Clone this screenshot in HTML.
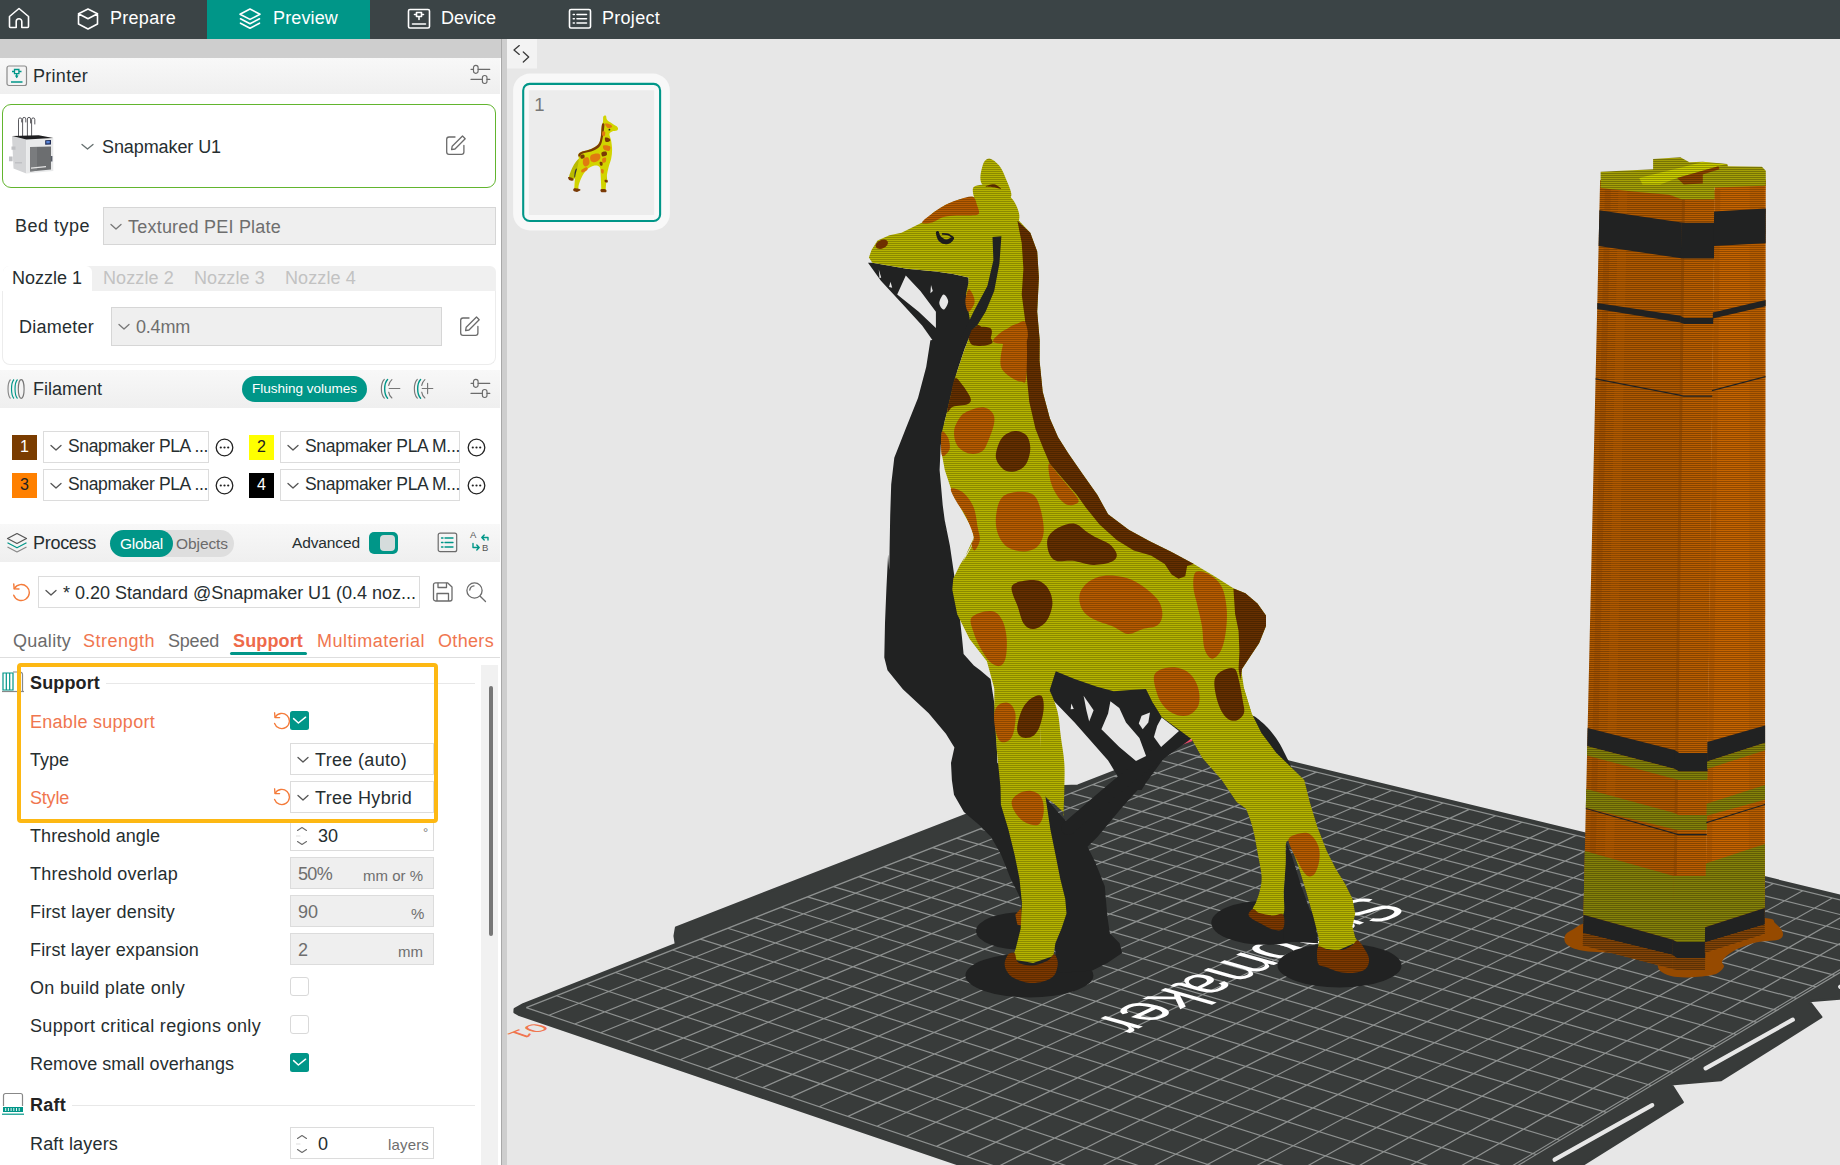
<!DOCTYPE html>
<html lang="en"><head><meta charset="utf-8"><title>Snapmaker Orca - Preview</title>
<style>
html,body{margin:0;padding:0;}
body{width:1840px;height:1165px;overflow:hidden;position:relative;background:#e7e7e7;font-family:"Liberation Sans",sans-serif;}
.t{position:absolute;white-space:nowrap;}
.b{position:absolute;box-sizing:border-box;}
#scene{position:absolute;left:0;top:0;}
</style></head><body>
<svg id="scene" width="1840" height="1165" viewBox="0 0 1840 1165"><defs><pattern id="p0" width="4" height="2" patternUnits="userSpaceOnUse"><rect width="4" height="1" fill="#b5b300"/><rect y="1" width="4" height="1" fill="#8b8900"/></pattern><pattern id="p1" width="4" height="2" patternUnits="userSpaceOnUse"><rect width="4" height="1" fill="#7c3800"/><rect y="1" width="4" height="1" fill="#602c00"/></pattern><pattern id="p2" width="4" height="2" patternUnits="userSpaceOnUse"><rect width="4" height="1" fill="#9c4b00"/><rect y="1" width="4" height="1" fill="#783900"/></pattern><pattern id="p3" width="4" height="2" patternUnits="userSpaceOnUse"><rect width="4" height="1" fill="#652f00"/><rect y="1" width="4" height="1" fill="#4d2500"/></pattern><pattern id="p4" width="4" height="2" patternUnits="userSpaceOnUse"><rect width="4" height="1" fill="#b75c00"/><rect y="1" width="4" height="1" fill="#8d4600"/></pattern><pattern id="p5" width="4" height="2" patternUnits="userSpaceOnUse"><rect width="4" height="1" fill="#b05900"/><rect y="1" width="4" height="1" fill="#804100"/></pattern><pattern id="p6" width="4" height="2" patternUnits="userSpaceOnUse"><rect width="4" height="1" fill="#ba5e00"/><rect y="1" width="4" height="1" fill="#864400"/></pattern><pattern id="p7" width="4" height="2" patternUnits="userSpaceOnUse"><rect width="4" height="1" fill="#c56400"/><rect y="1" width="4" height="1" fill="#8f4800"/></pattern><pattern id="p8" width="4" height="2" patternUnits="userSpaceOnUse"><rect width="4" height="1" fill="#848109"/><rect y="1" width="4" height="1" fill="#605d07"/></pattern><pattern id="p9" width="4" height="2" patternUnits="userSpaceOnUse"><rect width="4" height="1" fill="#814307"/><rect y="1" width="4" height="1" fill="#5d3105"/></pattern><pattern id="p10" width="4" height="2" patternUnits="userSpaceOnUse"><rect width="4" height="1" fill="#a5a007"/><rect y="1" width="4" height="1" fill="#777405"/></pattern><pattern id="p11" width="4" height="2" patternUnits="userSpaceOnUse"><rect width="4" height="1" fill="#cacc00"/><rect y="1" width="4" height="1" fill="#929400"/></pattern><pattern id="p12" width="4" height="2" patternUnits="userSpaceOnUse"><rect width="4" height="1" fill="#8e4600"/><rect y="1" width="4" height="1" fill="#663200"/></pattern></defs><polygon points="519.4,1014.9 514.6,1012.2 514.8,1009.1 523.2,1004.4 676.0,944.2 674.7,936.0 676.1,927.6 1037.1,787.3 1058.3,786.4 1077.9,785.7 1192.2,741.2 1199.4,740.8 1208.2,742.1 1942.2,920.6 1932.4,926.5 1945.3,940.9 1855.7,997.3 1808.9,1001.0 1808.9,1001.0 1821.2,1017.0 1721.0,1080.0 1671.1,1084.2 1671.1,1084.2 1682.6,1102.1 1569.8,1172.8 1516.3,1177.6 1516.3,1177.6 1526.6,1197.8 1398.8,1277.8 1341.2,1283.3 1329.2,1290.5" fill="#383b3a" stroke="#383b3a" stroke-width="2.5" stroke-linejoin="round"/>
<path d="M1384.1,1262.9 L1493.9,1201.2" stroke="#e7e7e7" stroke-width="4.2" stroke-linecap="round"/>
<path d="M1554.6,1159.7 L1652.2,1105.1" stroke="#e7e7e7" stroke-width="4.2" stroke-linecap="round"/>
<path d="M1705.6,1068.3 L1792.8,1019.7" stroke="#e7e7e7" stroke-width="4.2" stroke-linecap="round"/>
<path d="M1840.2,986.8 L1918.6,943.3" stroke="#e7e7e7" stroke-width="4.2" stroke-linecap="round"/>
<path d="M526.2,1007.6 L1328.6,1279.0 M556.4,995.7 L1356.3,1262.4 M586.1,984.0 L1383.5,1246.1 M615.4,972.5 L1410.2,1230.1 M644.1,961.2 L1436.3,1214.4 M672.5,950.0 L1462.0,1199.0 M700.3,939.1 L1487.2,1183.9 M727.7,928.3 L1512.0,1169.1 M754.7,917.6 L1536.3,1154.5 M781.3,907.2 L1560.1,1140.2 M807.5,896.9 L1583.5,1126.2 M833.2,886.7 L1606.5,1112.4 M858.6,876.7 L1629.2,1098.9 M883.6,866.9 L1651.4,1085.5 M908.2,857.2 L1673.2,1072.4 M932.5,847.7 L1694.7,1059.6 M956.4,838.2 L1715.7,1046.9 M979.9,829.0 L1736.5,1034.5 M1003.1,819.8 L1756.9,1022.3 M1026.0,810.8 L1776.9,1010.3 M1048.5,802.0 L1796.7,998.4 M1070.8,793.2 L1816.1,986.8 M1092.7,784.6 L1835.2,975.4 M1114.3,776.1 L1854.0,964.1 M1135.6,767.7 L1872.4,953.0 M1156.6,759.4 L1890.6,942.1 M1177.4,751.2 L1908.6,931.4 M1197.8,743.2 L1926.2,920.8 M526.2,1007.6 L1197.8,743.2 M549.0,1015.3 L1219.2,748.4 M574.7,1024.0 L1243.2,754.3 M600.6,1032.8 L1267.4,760.2 M626.9,1041.6 L1291.8,766.1 M653.4,1050.6 L1316.4,772.1 M680.2,1059.7 L1341.3,778.2 M707.4,1068.9 L1366.4,784.3 M734.9,1078.2 L1391.7,790.5 M762.6,1087.6 L1417.3,796.7 M790.8,1097.1 L1443.1,803.0 M819.2,1106.7 L1469.2,809.4 M848.0,1116.4 L1495.5,815.8 M877.1,1126.3 L1522.1,822.3 M906.6,1136.3 L1549.0,828.8 M936.5,1146.4 L1576.1,835.4 M966.7,1156.6 L1603.4,842.1 M997.3,1166.9 L1631.1,848.8 M1028.2,1177.4 L1659.0,855.6 M1059.6,1188.0 L1687.1,862.5 M1091.3,1198.7 L1715.6,869.5 M1123.4,1209.6 L1744.4,876.5 M1156.0,1220.6 L1773.4,883.5 M1188.9,1231.8 L1802.7,890.7 M1222.3,1243.1 L1832.4,897.9 M1256.1,1254.5 L1862.3,905.2 M1290.4,1266.1 L1892.6,912.6 M1325.1,1277.8 L1923.1,920.1 M1328.6,1279.0 L1926.2,920.8" stroke="#8d908f" stroke-width="1.2" fill="none"/>
<text transform="matrix(-0.53189 0.25363 -0.70690 -0.19994 1368.54 891.30)" x="12.4 73.8 126.1 179.4 233.7 317.2 374.4 426.8 486.3" y="-1.7 -1.3 -1.0 -0.6 -0.3 0.2 0.6 0.9 1.3" font-family="Liberation Sans, sans-serif" font-size="100" fill="#ffffff" >Snapmaker</text>
<text transform="matrix(-0.26911 0.10775 -0.22329 -0.07664 535.74 1022.48)" x="0.3 55.6" y="-0.2 -0.1" font-family="Liberation Sans, sans-serif" font-size="100" fill="#f0764f" >01</text>
<ellipse cx="1024.0" cy="931.0" rx="48" ry="19" fill="#212222" transform="rotate(0 1024.0 931.0)"/>
<ellipse cx="1029.4" cy="975.4" rx="64" ry="22" fill="#212222" transform="rotate(0 1029.4 975.4)"/>
<ellipse cx="1265.3" cy="922.8" rx="54" ry="22" fill="#212222" transform="rotate(0 1265.3 922.8)"/>
<ellipse cx="1339.5" cy="965.4" rx="62" ry="22" fill="#212222" transform="rotate(0 1339.5 965.4)"/>
<path d="M868.0,262.8 L880.9,280.8 L901.5,303.1 L922.1,325.4 L932.4,340.0 L930.4,340.3 L926.2,367.1 L918.0,398.0 L905.6,428.9 L894.3,457.8 L891.2,484.5 L890.2,515.5 L889.2,570.1 L888.1,554.3 L886.4,588.7 L885.0,623.0 L884.3,657.4 L887.5,670.3 L902.9,689.2 L928.7,713.2 L945.9,733.8 L954.4,747.6 L951.0,763.0 L951.9,780.2 L954.0,794.8 L963.9,812.1 L978.7,824.5 L991.1,836.9 L1000.9,854.2 L1010.8,878.9 L1018.3,893.7 L1022.0,903.6 L1018.3,918.5 L1033.1,918.5 L1033.1,854.2 L1033.1,780.0 L997.4,763.0 L995.6,711.5 L990.5,678.9 L980.2,670.3 L966.5,660.0 L991.1,708.9 L991.1,681.4 L977.4,669.4 L963.6,653.9 L961.9,636.8 L958.5,605.9 L954.2,574.9 L949.9,545.8 L944.7,520.0 L946.8,536.1 L942.7,505.1 L939.6,470.1 L940.7,445.4 L944.8,420.7 L951.0,398.0 L957.2,371.2 L965.4,346.5 L971.6,330.0 L977.1,325.4 L985.6,311.7 L994.2,291.1 L999.4,263.6 L1001.1,236.2 L992.5,237.0 L993.4,260.2 L987.4,285.9 L970.2,311.7 L968.5,277.4 L953.0,273.9 L935.9,271.4 L906.7,268.8 L872.3,262.8Z" fill="#212222" />
<path d="M905.8,275.6 L897.2,294.5 L918.7,311.7 L935.9,328.0 L935.9,311.7 L920.4,291.1Z" fill="#e7e7e7" />
<path d="M943.6,294.5 C945.1,294.2 948.2,298.9 948.2,301.4 C948.2,303.9 945.1,309.4 943.6,309.6 C942.1,309.9 939.3,305.6 939.3,303.1 C939.3,300.6 942.1,294.8 943.6,294.5Z" fill="#e7e7e7" />
<path d="M931.0,285.1 L932.8,291.1 L930.4,293.2Z" fill="#e7e7e7" />
<path d="M890.5,281.7 L892.2,287.7 L889.1,287.0Z" fill="#e7e7e7" />
<path d="M878.8,269.6 L881.2,277.4 L879.5,278.2Z" fill="#e7e7e7" />
<path d="M1043.0,794.8 L1057.8,812.1 L1070.2,825.7 L1107.3,794.8 L1122.1,780.0 L1146.8,780.0 L1122.1,807.2 L1097.4,836.9 L1087.5,846.8 L1094.9,861.6 L1104.8,886.3 L1107.3,916.0 L1109.8,933.3 L1119.6,943.2 L1122.1,953.1 L1107.3,963.0 L1092.4,970.4 L1057.8,972.9 L1052.9,928.4 L1047.9,854.2Z" fill="#212222" />
<path d="M1134,761.6 L1192,740" stroke="#f0476a" stroke-width="2.2"/>
<path d="M1055.7,664.5 L1074.6,671.2 L1097.0,679.0 L1113.7,683.4 L1130.4,682.3 L1150.5,682.3 L1159.5,702.4 L1167.3,716.9 L1184.0,729.2 L1191.8,731.4 L1186.2,738.1 L1174.0,749.3 L1163.9,758.2 L1146.1,782.8 L1141.6,790.0 L1117.1,790.0 L1121.5,782.8 L1108.1,760.4 L1074.6,722.5 L1046.7,693.5 L1049.0,686.8Z" fill="#212222" />
<path d="M1187.2,732.9 C1177.3,740.3 1147.6,761.5 1127.8,777.4 C1108.0,793.3 1078.4,819.6 1068.5,828.1" fill="none" stroke="#212222" stroke-width="14" stroke-linecap="round" stroke-linejoin="round" />
<path d="M1110.4,701.3 L1119.3,708.0 L1126.0,722.5 L1139.4,738.1 L1146.1,756.0 L1136.0,761.0 L1119.3,747.1 L1101.4,729.2 L1108.1,713.6Z" fill="#e7e7e7" />
<path d="M1161.7,717.5 L1179.0,730.9 L1161.1,747.1 L1153.9,737.0 L1157.2,725.8Z" fill="#e7e7e7" />
<path d="M1083.6,695.7 L1093.6,710.2 L1089.2,721.4 L1086.4,710.2Z" fill="#e7e7e7" />
<path d="M1141.6,715.8 L1150.0,712.5 L1148.3,722.5 L1142.7,729.2 L1138.8,723.6Z" fill="#e7e7e7" />
<path d="M1071.3,703.5 L1073.8,709.1 L1070.7,709.3Z" fill="#e7e7e7" />
<path d="M1252.0,716.0 C1253.0,714.2 1260.0,720.3 1264.0,724.0 C1268.0,727.7 1272.7,733.3 1276.0,738.0 C1279.3,742.7 1281.5,746.7 1284.0,752.0 C1286.5,757.3 1293.3,768.7 1291.0,770.0 C1288.7,771.3 1275.5,765.8 1270.0,760.0 C1264.5,754.2 1261.0,742.3 1258.0,735.0 C1255.0,727.7 1251.0,717.8 1252.0,716.0Z" fill="#212222" />
<path d="M1286.6,843.0 L1291.3,854.2 L1300.5,883.8 L1309.8,909.8 L1317.2,933.9 L1318.1,943.2 L1283.8,941.3 L1282.9,915.4 L1285.3,863.4Z" fill="#212222" />
<path d="M1042.0,685.8 C1043.4,677.7 1046.3,684.9 1048.9,689.2 C1051.4,693.5 1055.5,703.5 1057.5,711.5 C1059.5,719.5 1059.7,728.7 1060.9,737.3 C1062.0,745.9 1063.8,754.4 1064.3,763.0 C1064.9,771.6 1064.5,780.2 1064.3,788.8 C1064.2,797.4 1063.6,810.6 1063.5,814.5 C1063.3,818.4 1064.6,813.8 1063.3,812.1 C1061.9,810.5 1058.5,807.6 1055.4,804.7 C1052.2,801.8 1046.4,798.9 1044.2,794.8 C1042.0,790.7 1042.7,789.8 1042.0,780.2 C1041.3,770.6 1040.3,753.0 1040.3,737.3 C1040.3,721.5 1040.6,693.8 1042.0,685.8Z" fill="url(#p0)" />
<path d="M1230.1,780.0 C1225.7,784.9 1239.3,794.5 1243.0,802.3 C1246.8,810.0 1249.8,817.7 1252.3,826.4 C1254.8,835.0 1256.3,845.8 1257.9,854.2 C1259.4,862.5 1261.3,870.2 1261.6,876.4 C1261.9,882.6 1260.7,886.9 1259.7,891.3 C1258.8,895.6 1257.1,899.1 1256.0,902.4 C1254.9,905.6 1251.4,908.3 1253.2,910.7 C1255.1,913.2 1262.2,916.4 1267.2,917.2 C1272.1,918.0 1280.1,919.7 1282.9,915.4 C1285.7,911.0 1283.4,899.9 1283.8,891.3 C1284.3,882.6 1285.3,871.5 1285.7,863.4 C1286.1,855.4 1285.1,847.7 1286.1,843.0 C1287.0,838.4 1291.6,843.0 1291.3,835.6 C1290.9,828.2 1287.5,809.1 1283.8,798.5 C1280.1,788.0 1278.0,775.7 1269.0,772.6 C1260.0,769.5 1234.4,775.1 1230.1,780.0Z" fill="url(#p0)" />
<path d="M1248.6,913.9 C1248.9,912.3 1251.4,909.0 1253.2,908.9 C1255.1,908.7 1256.5,912.1 1259.7,913.1 C1263.0,914.2 1268.8,915.1 1272.7,915.4 C1276.6,915.6 1281.4,912.2 1283.1,914.4 C1284.8,916.7 1284.8,926.2 1283.1,928.7 C1281.4,931.2 1276.6,930.4 1272.7,929.5 C1268.8,928.5 1263.3,925.0 1259.7,923.1 C1256.2,921.3 1253.2,919.9 1251.4,918.3 C1249.5,916.8 1248.3,915.5 1248.6,913.9Z" fill="url(#p1)" />
<path d="M1015.3,914.8 L1021.2,908.1 L1022.7,925.9 L1017.3,924.4Z" fill="url(#p2)" />
<path d="M868.9,257.6 L871.5,249.9 L877.5,240.4 L889.5,235.3 L901.5,232.7 L922.1,222.4 L934.1,212.1 L946.2,204.4 L959.9,199.2 L972.8,196.7 L987.4,205.2 L1004.5,215.5 L1019.1,220.7 L1030.3,232.7 L1037.2,251.6 L1038.9,277.4 L1037.2,311.7 L1039.7,340.0 L1039.6,360.9 L1042.7,391.8 L1049.9,418.6 L1058.1,437.2 L1068.4,453.6 L1082.8,474.2 L1097.3,494.8 L1108.1,514.3 L1128.7,529.8 L1149.3,541.0 L1171.6,552.1 L1193.9,564.1 L1214.5,576.2 L1233.4,588.2 L1245.4,593.3 L1257.5,603.6 L1266.0,615.6 L1266.0,625.9 L1259.2,643.1 L1248.9,658.6 L1242.0,668.9 L1240.3,680.0 L1244.0,688.4 L1251.5,713.1 L1226.7,727.9 L1189.6,727.9 L1167.4,718.0 L1152.8,702.4 L1146.1,689.0 L1130.4,690.1 L1113.7,691.2 L1097.0,686.8 L1074.6,679.0 L1055.7,671.2 L1048.7,693.3 L1024.0,703.2 L994.3,688.4 L986.9,661.2 L969.6,638.9 L957.2,614.2 L952.3,589.5 L953.3,578.4 L960.2,564.6 L970.5,547.5 L975.6,533.7 L962.3,562.8 L969.5,550.5 L974.7,540.2 L971.6,527.8 L961.3,509.3 L951.0,488.7 L944.8,470.1 L941.7,453.6 L941.7,433.0 L946.8,412.4 L955.1,377.4 L963.3,352.7 L971.6,330.0 L968.5,311.7 L965.9,294.5 L968.5,282.5 L968.5,277.4 L953.0,273.9 L935.9,271.4 L906.7,268.8 L872.3,262.8Z" fill="url(#p0)" />
<path d="M982.2,184.6 C978.5,179.5 981.4,170.1 982.6,165.8 C983.7,161.4 986.3,158.5 989.1,158.5 C991.9,158.5 996.5,162.3 999.4,165.8 C1002.2,169.2 1004.2,174.6 1006.2,179.5 C1008.3,184.4 1011.7,192.1 1011.4,194.9 C1011.1,197.8 1009.4,198.4 1004.5,196.7 C999.7,194.9 985.9,189.8 982.2,184.6Z" fill="url(#p0)" />
<path d="M972.8,189.8 C972.9,186.8 974.6,186.3 977.1,185.5 C979.5,184.7 983.4,184.4 987.4,185.0 C991.4,185.6 996.8,186.4 1001.1,188.9 C1005.4,191.5 1010.1,195.9 1013.1,200.1 C1016.1,204.2 1018.3,209.8 1019.1,213.8 C1019.9,217.8 1018.9,221.0 1017.9,224.1 C1016.9,227.3 1015.6,231.1 1013.1,232.7 C1010.6,234.3 1006.2,234.2 1002.8,233.6 C999.4,233.0 995.7,232.0 992.5,229.3 C989.4,226.6 986.6,221.6 983.9,217.3 C981.2,213.0 978.1,208.1 976.2,203.5 C974.3,199.0 972.6,192.8 972.8,189.8Z" fill="url(#p0)" />
<path d="M1141.6,682.3 L1146.1,689.0 L1152.8,702.4 L1161.7,716.9 L1179.6,730.3 L1191.8,739.2 L1202.0,757.6 L1221.8,779.9 L1236.6,802.1 L1288.5,839.3 L1298.7,867.2 L1306.1,891.3 L1313.5,917.2 L1319.1,939.5 L1318.1,947.8 L1337.6,950.6 L1358.0,941.7 L1355.2,937.6 L1352.4,926.5 L1355.2,913.5 L1352.4,898.7 L1345.0,883.8 L1335.8,869.0 L1326.5,850.5 L1317.2,826.4 L1309.8,802.3 L1304.2,780.0 L1276.2,752.7 L1261.4,732.9 L1251.5,713.1 L1244.0,688.4 L1240.3,663.6 L1202.0,651.3Z" fill="url(#p0)" />
<path d="M1004.2,668.6 L994.3,688.4 L994.3,713.1 L996.8,750.2 L1000.5,787.3 L1000.9,804.7 L1008.4,829.5 L1014.5,854.2 L1019.5,878.9 L1022.0,903.6 L1020.7,928.4 L1015.8,948.2 L1012.1,959.3 L1033.1,963.0 L1053.4,956.1 L1055.4,943.2 L1061.5,928.4 L1066.5,913.5 L1065.2,898.7 L1060.3,878.9 L1055.4,854.2 L1050.4,829.5 L1046.7,804.7 L1043.0,780.0 L1043.7,780.2 L1042.0,763.0 L1040.3,737.3 L1042.0,697.8 L1055.7,671.2Z" fill="url(#p0)" />
<path d="M1004.7,963.5 C1004.9,960.6 1006.7,956.1 1008.4,954.3 C1010.0,952.6 1012.9,951.7 1014.5,953.1 C1016.2,954.5 1015.2,960.4 1018.3,962.5 C1021.4,964.6 1028.2,965.8 1033.1,965.5 C1038.0,965.1 1044.4,962.4 1047.9,960.5 C1051.4,958.7 1052.5,953.9 1054.1,954.3 C1055.8,954.7 1057.8,959.5 1057.8,963.0 C1057.8,966.5 1056.6,972.3 1054.1,975.4 C1051.6,978.4 1047.3,980.3 1043.0,981.5 C1038.7,982.8 1033.1,983.4 1028.2,982.8 C1023.2,982.2 1016.8,979.7 1013.3,977.8 C1009.8,976.0 1008.6,974.0 1007.1,971.6 C1005.7,969.3 1004.5,966.4 1004.7,963.5Z" fill="url(#p1)" />
<path d="M1318.1,946.9 C1319.8,944.6 1324.2,949.2 1328.3,949.7 C1332.5,950.1 1339.2,950.4 1343.2,949.7 C1347.2,948.9 1350.0,946.6 1352.4,945.0 C1354.9,943.5 1355.8,939.5 1358.0,940.4 C1360.2,941.3 1363.6,947.3 1365.4,950.6 C1367.3,953.8 1369.1,956.8 1369.1,959.9 C1369.1,963.0 1367.9,967.0 1365.4,969.1 C1363.0,971.3 1358.6,972.4 1354.3,972.8 C1350.0,973.3 1344.1,972.8 1339.5,971.9 C1334.8,971.0 1330.0,968.7 1326.5,967.3 C1322.9,965.9 1319.5,967.0 1318.1,963.6 C1316.8,960.2 1316.4,949.2 1318.1,946.9Z" fill="url(#p1)" />
<path d="M1017.4,220.7 L1030.3,232.7 L1037.2,251.6 L1038.9,277.4 L1037.2,311.7 L1039.7,340.0 L1039.6,360.9 L1042.7,391.8 L1049.9,418.6 L1058.1,437.2 L1068.4,453.6 L1082.8,474.2 L1097.3,494.8 L1108.1,514.3 L1128.7,529.8 L1149.3,541.0 L1171.6,552.1 L1193.9,564.1 L1187.1,565.9 L1185.3,576.2 L1178.5,578.7 L1171.6,574.4 L1164.7,564.1 L1151.0,555.5 L1133.8,550.4 L1116.7,540.1 L1099.5,524.6 L1085.8,507.5 L1076.7,494.8 L1049.9,463.9 L1043.7,449.5 L1035.5,428.9 L1029.3,402.1 L1026.2,371.2 L1025.1,330.0 L1025.1,320.3 L1021.7,294.5 L1023.4,268.8 L1021.7,243.0Z" fill="url(#p3)" />
<path d="M1233.4,588.5 L1245.4,593.3 L1257.5,603.6 L1266.0,615.6 L1266.0,625.9 L1259.2,643.1 L1248.9,658.6 L1242.0,668.9 L1240.3,680.0 L1238.6,668.9 L1239.4,651.7 L1238.6,631.1 L1235.1,613.9Z" fill="url(#p3)" />
<path d="M922.1,222.4 C922.4,220.7 930.1,215.1 934.1,212.1 C938.1,209.1 941.9,206.5 946.2,204.4 C950.4,202.2 955.5,200.5 959.9,199.2 C964.3,197.9 969.9,195.7 972.8,196.7 C975.6,197.7 976.1,202.4 977.1,205.2 C978.1,208.1 979.9,212.1 978.8,213.8 C977.6,215.5 973.9,215.3 970.2,215.5 C966.5,215.8 961.0,215.3 956.5,215.5 C951.9,215.8 946.7,216.1 942.7,217.3 C938.7,218.4 935.9,221.6 932.4,222.4 C929.0,223.3 921.8,224.1 922.1,222.4Z" fill="url(#p4)" />
<ellipse cx="881.8" cy="244.2" rx="6.5" ry="4.2" fill="#6e3000" transform="rotate(-25 881.8 244.2)"/>
<path d="M985.6,186.4 C985.6,185.9 991.7,183.9 994.2,184.3 C996.8,184.7 1001.1,188.4 1001.1,188.9 C1001.1,189.4 996.8,187.6 994.2,187.2 C991.7,186.8 985.6,186.8 985.6,186.4Z" fill="url(#p3)" />
<path d="M935.9,232.7 C935.9,231.2 937.6,230.8 938.4,231.3 C939.2,231.9 939.4,234.8 940.7,236.2 C941.9,237.5 944.3,239.4 946.2,239.6 C948.0,239.8 950.3,237.4 951.6,237.2 C953.0,237.0 954.3,237.6 954.1,238.6 C953.9,239.5 952.1,242.1 950.4,243.0 C948.8,243.9 946.1,244.5 944.1,244.1 C942.1,243.6 939.8,242.3 938.4,240.4 C937.1,238.6 935.9,234.2 935.9,232.7Z" fill="#1c1c1c" />
<path d="M942.7,233.8 C943.6,233.9 946.2,233.8 947.9,234.4 C949.6,235.1 952.2,237.0 953.0,237.5" fill="none" stroke="#1c1c1c" stroke-width="1.8" stroke-linecap="round" stroke-linejoin="round" />
<path d="M977.1,325.4 C979.6,323.7 983.1,329.4 985.6,332.3 C988.2,335.2 993.4,340.3 992.5,342.6 C991.7,344.9 984.2,346.0 980.5,346.0 C976.8,346.0 970.8,346.0 970.2,342.6 C969.6,339.2 974.5,327.2 977.1,325.4Z" fill="url(#p3)" />
<path d="M994.2,342.6 C990.2,340.9 997.7,335.2 1001.1,332.3 C1004.5,329.4 1010.8,327.2 1014.8,325.4 C1018.8,323.7 1023.4,319.1 1025.1,322.0 C1026.9,324.9 1030.3,339.2 1025.1,342.6 C1020.0,346.0 998.2,344.3 994.2,342.6Z" fill="url(#p4)" />
<path d="M968.5,289.4 C969.7,288.2 971.8,292.2 972.8,294.5 C973.8,296.8 975.2,300.3 974.5,303.1 C973.8,306.0 970.0,312.0 968.5,311.7 C967.0,311.4 965.4,305.1 965.4,301.4 C965.4,297.7 967.2,290.5 968.5,289.4Z" fill="url(#p4)" />
<path d="M971.6,327.9 C975.2,326.2 987.0,326.2 990.1,327.9 C993.3,329.7 991.6,335.4 990.5,338.2 C989.5,341.1 986.8,343.7 983.9,344.8 C981.1,345.9 976.2,345.9 973.6,344.8 C971.1,343.7 968.8,341.1 968.5,338.2 C968.1,335.4 968.0,329.7 971.6,327.9Z" fill="url(#p3)" />
<path d="M1008.7,327.9 C1012.4,324.8 1022.2,319.7 1025.1,327.9 C1028.1,336.2 1026.9,368.5 1026.2,377.4 C1025.5,386.3 1023.3,381.3 1021.0,381.5 C1018.8,381.7 1015.7,380.1 1012.8,378.4 C1009.9,376.7 1005.6,373.8 1003.5,371.2 C1001.5,368.6 1000.6,367.1 1000.4,363.0 C1000.3,358.8 1001.1,352.3 1002.5,346.5 C1003.9,340.6 1004.9,331.0 1008.7,327.9Z" fill="url(#p4)" />
<path d="M955.1,378.4 C956.8,376.7 958.7,380.3 961.3,383.6 C963.8,386.8 969.5,394.6 970.5,398.0 C971.6,401.4 970.4,402.7 967.5,404.2 C964.5,405.6 956.4,405.3 953.0,406.7 C949.7,408.0 947.6,414.1 947.3,412.0 C946.9,409.9 949.7,399.5 951.0,393.9 C952.3,388.3 953.4,380.1 955.1,378.4Z" fill="url(#p3)" />
<path d="M965.4,412.4 C969.2,410.5 977.4,407.3 981.9,407.3 C986.3,407.3 990.1,409.8 992.2,412.4 C994.2,415.0 994.9,417.9 994.2,422.7 C993.6,427.5 990.1,436.5 988.1,441.3 C986.0,446.1 985.0,449.5 981.9,451.6 C978.8,453.6 973.6,454.7 969.5,453.6 C965.4,452.6 959.7,449.2 957.2,445.4 C954.6,441.6 953.7,435.4 954.1,431.0 C954.4,426.5 957.3,421.7 959.2,418.6 C961.1,415.5 961.6,414.3 965.4,412.4Z" fill="url(#p4)" />
<path d="M941.7,432.0 C942.7,429.1 946.5,434.6 947.9,437.2 C949.3,439.7 950.1,444.7 949.9,447.5 C949.8,450.2 948.2,452.4 946.8,453.6 C945.5,454.8 942.6,458.3 941.7,454.7 C940.8,451.1 940.7,434.9 941.7,432.0Z" fill="url(#p4)" />
<path d="M1002.5,437.2 C1005.6,433.7 1010.9,431.3 1014.8,431.0 C1018.8,430.6 1023.6,432.3 1026.2,435.1 C1028.8,437.8 1030.1,443.0 1030.3,447.5 C1030.5,451.9 1029.1,458.1 1027.2,461.9 C1025.3,465.7 1022.4,468.6 1019.0,470.1 C1015.5,471.7 1010.2,472.5 1006.6,471.1 C1003.0,469.8 999.0,465.1 997.3,461.9 C995.6,458.6 995.4,455.7 996.3,451.6 C997.2,447.5 999.4,440.6 1002.5,437.2Z" fill="url(#p3)" />
<path d="M1048.8,463.9 C1050.0,462.6 1054.9,470.5 1058.1,474.2 C1061.4,478.0 1065.0,482.1 1068.4,486.6 C1071.9,491.1 1078.7,497.9 1078.7,501.0 C1078.7,504.1 1071.9,505.8 1068.4,505.1 C1065.0,504.5 1061.0,500.7 1058.1,496.9 C1055.2,493.1 1052.5,488.0 1050.9,482.5 C1049.4,477.0 1047.6,465.3 1048.8,463.9Z" fill="url(#p4)" />
<path d="M1002.5,496.9 C1006.3,493.3 1013.8,492.1 1019.0,491.8 C1024.1,491.4 1029.8,491.9 1033.4,494.8 C1037.0,497.8 1038.9,503.1 1040.6,509.3 C1042.3,515.5 1044.2,525.8 1043.7,531.9 C1043.2,538.1 1040.9,543.1 1037.5,546.4 C1034.1,549.6 1028.2,551.5 1023.1,551.5 C1017.9,551.5 1010.9,549.6 1006.6,546.4 C1002.3,543.1 999.0,537.4 997.3,531.9 C995.6,526.4 995.4,519.2 996.3,513.4 C997.2,507.6 998.7,500.5 1002.5,496.9Z" fill="url(#p4)" />
<path d="M951.0,488.7 C952.2,487.3 959.6,489.7 963.3,492.8 C967.1,495.9 971.2,501.4 973.6,507.2 C976.0,513.0 976.7,522.3 977.8,527.8 C978.8,533.3 980.3,536.4 979.8,540.2 C979.3,544.0 976.0,549.8 974.7,550.5 C973.3,551.2 971.7,546.7 971.6,544.3 C971.4,541.9 974.7,540.9 973.6,536.1 C972.6,531.3 968.3,521.3 965.4,515.5 C962.5,509.6 958.5,505.5 956.1,501.0 C953.7,496.6 949.8,490.0 951.0,488.7Z" fill="url(#p4)" />
<path d="M1047.8,538.1 C1049.4,534.0 1053.7,530.2 1058.1,527.8 C1062.6,525.4 1069.8,523.0 1074.6,523.7 C1079.4,524.4 1083.2,529.5 1087.0,531.9 C1090.7,534.3 1093.5,536.1 1097.3,538.1 C1101.0,540.2 1106.4,541.6 1109.6,544.3 C1112.9,547.0 1116.5,551.7 1116.8,554.6 C1117.2,557.5 1115.6,560.1 1111.7,561.8 C1107.7,563.5 1099.7,565.1 1093.1,564.9 C1086.6,564.7 1078.7,561.5 1072.5,560.8 C1066.4,560.1 1060.0,562.2 1056.1,560.8 C1052.1,559.4 1050.2,556.3 1048.8,552.5 C1047.5,548.8 1046.3,542.2 1047.8,538.1Z" fill="url(#p3)" />
<path d="M1011.6,587.0 C1012.6,582.7 1019.4,581.8 1024.0,580.8 C1028.5,579.8 1034.7,579.4 1038.8,580.8 C1042.9,582.2 1046.4,585.5 1048.7,589.5 C1051.0,593.4 1052.8,598.9 1052.4,604.3 C1052.0,609.7 1049.3,617.5 1046.2,621.6 C1043.1,625.7 1037.6,628.6 1033.9,629.0 C1030.1,629.4 1026.6,627.8 1024.0,624.1 C1021.3,620.4 1019.8,612.9 1017.8,606.8 C1015.7,600.6 1010.6,591.3 1011.6,587.0Z" fill="url(#p3)" />
<path d="M1079.6,594.4 C1080.6,589.9 1084.3,585.1 1088.3,582.0 C1092.2,578.9 1097.3,576.7 1103.1,575.9 C1108.9,575.0 1116.7,575.6 1122.9,577.1 C1129.1,578.5 1134.4,580.8 1140.2,584.5 C1146.0,588.2 1153.8,594.4 1157.5,599.3 C1161.2,604.3 1162.4,609.9 1162.4,614.2 C1162.4,618.5 1160.8,622.8 1157.5,625.3 C1154.2,627.8 1147.6,627.6 1142.7,629.0 C1137.7,630.5 1132.8,634.4 1127.8,634.0 C1122.9,633.6 1118.8,629.0 1113.0,626.5 C1107.2,624.1 1098.4,622.0 1093.2,619.1 C1088.1,616.2 1084.3,613.4 1082.1,609.2 C1079.8,605.1 1078.6,598.9 1079.6,594.4Z" fill="url(#p4)" />
<path d="M1195.8,572.1 C1198.5,570.1 1205.1,572.1 1209.4,574.6 C1213.8,577.1 1218.9,581.2 1221.8,587.0 C1224.7,592.8 1226.1,601.4 1226.7,609.2 C1227.4,617.1 1226.5,627.0 1225.5,634.0 C1224.5,641.0 1222.8,647.2 1220.6,651.3 C1218.3,655.4 1214.6,659.1 1211.9,658.7 C1209.2,658.3 1206.1,654.2 1204.5,648.8 C1202.8,643.4 1203.2,634.0 1202.0,626.5 C1200.8,619.1 1198.5,610.9 1197.1,604.3 C1195.6,597.7 1193.6,592.3 1193.4,587.0 C1193.1,581.6 1193.1,574.2 1195.8,572.1Z" fill="url(#p4)" />
<path d="M970.8,619.1 C971.8,616.0 975.5,614.2 979.5,612.9 C983.4,611.7 990.4,610.3 994.3,611.7 C998.2,613.2 1000.9,617.1 1002.9,621.6 C1005.0,626.1 1006.2,632.7 1006.7,638.9 C1007.1,645.1 1006.7,654.2 1005.4,658.7 C1004.2,663.2 1001.9,665.7 999.2,666.1 C996.6,666.5 992.6,664.5 989.3,661.2 C986.1,657.9 982.1,651.3 979.5,646.3 C976.8,641.4 974.7,636.0 973.3,631.5 C971.8,627.0 969.8,622.2 970.8,619.1Z" fill="url(#p4)" />
<path d="M1153.8,678.5 C1153.8,673.3 1156.5,671.7 1160.0,669.8 C1163.5,668.0 1169.9,666.7 1174.8,667.3 C1179.8,668.0 1185.7,670.0 1189.6,673.5 C1193.6,677.0 1196.9,683.0 1198.3,688.4 C1199.7,693.7 1200.2,701.1 1198.3,705.7 C1196.4,710.2 1191.5,714.3 1187.2,715.6 C1182.8,716.8 1176.9,715.6 1172.3,713.1 C1167.8,710.6 1163.1,706.5 1160.0,700.7 C1156.9,695.0 1153.8,683.6 1153.8,678.5Z" fill="url(#p4)" />
<path d="M1214.4,680.9 C1215.0,675.6 1218.5,673.1 1221.8,671.1 C1225.1,669.0 1231.3,666.9 1234.2,668.6 C1237.0,670.2 1237.7,675.6 1239.1,680.9 C1240.5,686.3 1242.0,695.4 1242.8,700.7 C1243.6,706.1 1245.1,709.8 1244.0,713.1 C1243.0,716.4 1239.5,719.7 1236.6,720.5 C1233.7,721.3 1229.8,720.9 1226.7,718.0 C1223.6,715.2 1220.1,709.4 1218.1,703.2 C1216.0,697.0 1213.8,686.3 1214.4,680.9Z" fill="url(#p3)" />
<path d="M994.3,713.1 C994.9,708.8 996.8,706.1 999.2,704.4 C1001.7,702.8 1006.5,701.8 1009.1,703.2 C1011.8,704.6 1014.5,708.6 1015.3,713.1 C1016.1,717.6 1015.1,725.9 1014.1,730.4 C1013.0,734.9 1011.4,738.4 1009.1,740.3 C1006.9,742.2 1002.7,743.2 1000.5,741.5 C998.2,739.9 996.6,735.1 995.5,730.4 C994.5,725.7 993.7,717.4 994.3,713.1Z" fill="url(#p4)" />
<path d="M1017.8,723.0 C1018.6,718.9 1020.5,712.3 1022.7,708.2 C1025.0,704.0 1028.3,700.3 1031.4,698.3 C1034.5,696.2 1039.2,694.1 1041.3,695.8 C1043.3,697.4 1044.0,703.2 1043.7,708.2 C1043.5,713.1 1041.7,720.9 1040.0,725.5 C1038.4,730.0 1036.5,733.3 1033.9,735.4 C1031.2,737.4 1026.6,738.2 1024.0,737.8 C1021.3,737.4 1018.8,735.4 1017.8,732.9 C1016.8,730.4 1017.0,727.1 1017.8,723.0Z" fill="url(#p3)" />
<path d="M1011.6,802.1 C1012.0,798.6 1015.7,795.3 1019.0,793.5 C1022.3,791.6 1027.7,790.4 1031.4,791.0 C1035.1,791.6 1039.2,793.7 1041.3,797.2 C1043.3,800.7 1044.2,807.5 1043.7,812.0 C1043.3,816.5 1041.7,822.5 1038.8,824.4 C1035.9,826.2 1030.1,824.8 1026.4,823.1 C1022.7,821.5 1019.0,818.0 1016.5,814.5 C1014.1,811.0 1011.2,805.6 1011.6,802.1Z" fill="url(#p4)" />
<path d="M1288.5,839.3 C1289.1,837.0 1292.0,835.8 1295.0,834.7 C1297.9,833.6 1303.0,832.4 1306.1,832.8 C1309.2,833.3 1311.3,834.9 1313.5,837.5 C1315.7,840.1 1318.1,844.6 1319.1,848.6 C1320.0,852.6 1319.7,857.6 1319.1,861.6 C1318.5,865.6 1316.9,870.2 1315.4,872.7 C1313.8,875.2 1311.7,876.4 1309.8,876.4 C1307.9,876.4 1306.4,875.5 1304.2,872.7 C1302.1,869.9 1299.0,863.8 1296.8,859.7 C1294.7,855.7 1292.6,852.0 1291.3,848.6 C1289.9,845.2 1287.9,841.7 1288.5,839.3Z" fill="url(#p4)" />
<path d="M992.5,237.0 L993.4,260.2 L987.4,285.9 L973.6,311.7 L959.9,340.0 L965.4,346.5 L971.6,330.0 L977.1,325.4 L985.6,311.7 L994.2,291.1 L999.4,263.6 L1001.4,236.2Z" fill="#212222" />
<path d="M1564.6,937.1 C1563.9,939.7 1564.7,943.1 1568.1,945.4 C1571.5,947.7 1576.2,949.6 1584.8,951.0 C1593.4,952.4 1608.2,952.1 1619.5,953.7 C1630.8,955.3 1646.2,957.9 1652.9,960.7 C1659.6,963.5 1656.8,967.9 1659.8,970.4 C1662.8,972.9 1666.1,974.8 1671.0,976.0 C1675.9,977.2 1681.8,977.6 1689.0,977.4 C1696.2,977.2 1708.3,976.3 1714.1,974.6 C1719.9,972.9 1722.4,969.3 1723.8,967.0 C1725.2,964.7 1720.8,963.4 1722.4,960.7 C1724.0,958.0 1727.9,954.0 1733.5,951.0 C1739.1,948.0 1748.4,944.5 1755.8,942.6 C1763.2,940.7 1773.5,941.4 1778.0,939.8 C1782.5,938.2 1783.4,935.7 1782.9,932.9 C1782.5,930.1 1778.3,925.7 1775.3,923.2 C1772.3,920.7 1777.3,919.4 1764.8,918.0 C1752.2,916.6 1727.5,914.7 1700.0,915.0 C1672.5,915.3 1621.3,917.5 1600.0,920.0 C1578.7,922.5 1577.9,927.1 1572.0,930.0 C1566.1,932.9 1565.2,934.5 1564.6,937.1Z" fill="#964a00"/>
<path d="M1600.1,180.0 L1682.8,190.0 L1673.4,969.0 L1582.7,945.4Z" fill="url(#p5)" />
<path d="M1682.0,190.0 L1714.9,190.0 L1705.0,970.0 L1672.6,969.0Z" fill="url(#p6)" />
<path d="M1714.5,185.0 L1765.8,180.0 L1764.8,934.0 L1704.8,953.0Z" fill="url(#p7)" />
<path d="M1683.5,192 L1674.1,968" stroke="#7a3d00" stroke-width="3" opacity="0.5"/>
<path d="M1623.0,184 L1607.7,945" stroke="#b05c00" stroke-width="9" opacity="0.28"/>
<path d="M1608.0,183 L1590.7,945" stroke="#7a3d00" stroke-width="6" opacity="0.25"/>
<path d="M1717.9,190 L1708.3,950" stroke="#8a4500" stroke-width="5" opacity="0.3"/>
<path d="M1756.8,184 L1755.8,930" stroke="#8a4500" stroke-width="14" opacity="0.22"/>
<path d="M1599.4,210.3 L1681.6,222.6 L1681.2,258.3 L1598.6,246.0Z" fill="#212222" />
<path d="M1681.3,222.6 L1685.6,222.8 L1714.5,222.8 L1714.0,258.6 L1685.2,258.6 L1680.9,258.3Z" fill="#212222" />
<path d="M1714.1,211.4 L1765.8,208.6 L1765.7,243.2 L1713.7,246.0Z" fill="#212222" />
<path d="M1597.3,302.9 L1680.5,315.7 L1680.4,322.4 L1597.2,309.0Z" fill="#212222" />
<path d="M1680.2,315.7 L1684.4,318.0 L1713.3,318.0 L1713.2,324.0 L1684.4,324.0 L1680.1,322.4Z" fill="#212222" />
<path d="M1712.9,312.4 L1765.6,300.1 L1765.6,306.2 L1712.8,318.5Z" fill="#212222" />
<path d="M1595.6,378.3 L1679.5,394.5 L1679.5,395.8 L1595.5,379.5Z" fill="#212222" />
<path d="M1679.2,394.5 L1683.5,395.5 L1712.3,395.5 L1712.3,396.8 L1683.5,396.8 L1679.2,395.8Z" fill="#212222" />
<path d="M1711.9,390.0 L1765.5,376.0 L1765.5,377.2 L1711.9,391.2Z" fill="#212222" />
<path d="M1587.6,728.1 L1675.2,750.2 L1675.0,768.9 L1587.2,746.2Z" fill="#212222" />
<path d="M1674.9,750.2 L1679.2,752.9 L1707.8,752.9 L1707.6,771.6 L1679.0,771.6 L1674.7,768.9Z" fill="#212222" />
<path d="M1707.4,742.1 L1765.1,725.4 L1765.1,742.8 L1707.2,761.6Z" fill="#212222" />
<path d="M1587.2,746.2 L1675.0,768.9 L1674.9,779.0 L1587.0,755.5Z" fill="url(#p8)" />
<path d="M1674.7,768.9 L1679.0,771.6 L1707.6,771.6 L1707.4,780.0 L1678.9,780.0 L1674.6,779.0Z" fill="url(#p8)" />
<path d="M1707.2,761.6 L1765.1,742.8 L1765.1,750.2 L1707.1,768.9Z" fill="url(#p8)" />
<path d="M1586.2,789.0 L1674.5,813.1 L1674.3,829.2 L1585.8,807.8Z" fill="url(#p8)" />
<path d="M1674.2,813.1 L1678.4,815.1 L1707.0,815.1 L1706.8,830.0 L1678.3,830.0 L1674.0,829.2Z" fill="url(#p8)" />
<path d="M1706.6,803.7 L1765.0,785.0 L1765.0,799.7 L1706.5,815.8Z" fill="url(#p8)" />
<path d="M1585.8,807.9 L1674.2,832.7 L1674.2,833.9 L1585.8,809.1Z" fill="#212222" />
<path d="M1673.9,832.7 L1678.2,834.0 L1706.8,834.0 L1706.7,835.2 L1678.2,835.2 L1673.9,833.9Z" fill="#212222" />
<path d="M1706.4,822.0 L1765.0,803.9 L1765.0,805.1 L1706.4,823.2Z" fill="#212222" />
<path d="M1584.8,850.9 L1673.7,875.9 L1672.9,939.8 L1583.4,914.8Z" fill="url(#p8)" />
<path d="M1673.4,875.9 L1677.7,875.9 L1706.2,875.9 L1705.4,942.0 L1676.9,942.0 L1672.6,939.8Z" fill="url(#p8)" />
<path d="M1705.9,863.4 L1764.9,843.9 L1764.8,907.9 L1705.1,927.3Z" fill="url(#p8)" />
<path d="M1583.4,914.8 L1672.9,939.8 L1672.7,955.0 L1583.0,932.9Z" fill="#212222" />
<path d="M1672.6,939.8 L1676.9,942.0 L1705.4,942.0 L1705.2,958.0 L1676.7,958.0 L1672.4,955.0Z" fill="#212222" />
<path d="M1705.1,927.3 L1764.8,907.9 L1764.8,924.5 L1704.9,942.6Z" fill="#212222" />
<path d="M1583.0,932.9 L1672.7,955.0 L1672.6,969.0 L1582.7,945.4Z" fill="url(#p9)" />
<path d="M1672.4,955.0 L1676.7,958.0 L1705.2,958.0 L1705.0,970.0 L1676.6,970.0 L1672.3,969.0Z" fill="url(#p9)" />
<path d="M1704.9,942.6 L1764.8,924.5 L1764.8,934.0 L1704.8,953.0Z" fill="url(#p9)" />
<path d="M1600.6,171.8 L1653.1,169.2 L1653.1,159.0 L1680.4,157.3 L1689.4,162.3 L1702.8,161.8 L1727.3,164.0 L1727.9,166.2 L1761.9,166.8 L1765.8,170.7 L1765.8,185.8 L1714.5,187.4 L1714.5,199.2 L1681.6,199.2 L1669.3,194.7 L1638.0,191.9 L1600.6,188.0Z" fill="url(#p10)" />
<path d="M1639.2,177.9 L1701.7,162.3 L1725.1,164.0 L1718.4,166.2 L1677.1,177.9 L1660.4,184.6 L1642.5,184.6Z" fill="url(#p11)" />
<path d="M1677.1,177.9 L1718.4,166.2 L1719.5,169.2 L1702.8,174.6 L1702.8,183.5 L1683.8,184.6Z" fill="url(#p12)" />
<rect x="507" y="39" width="30" height="29.5" fill="#f3f3f3"/>
<path d="M519.3,45.6 L514,50 L519.3,54.4 M523.3,52 L528.7,57 L523.3,62" fill="none" stroke="#3a3a3a" stroke-width="1.3" stroke-linecap="round" stroke-linejoin="round"/>
<rect x="513.1" y="73.6" width="156.8" height="156.8" rx="17" fill="#f8f8f8"/>
<rect x="523.2" y="83.9" width="136.9" height="137.1" rx="6.5" fill="#f8f8f8" stroke="#009688" stroke-width="2.1"/>
<rect x="528.9" y="90.3" width="125.2" height="124.7" fill="#ececec"/>
<text x="534.2" y="110.6" font-family="Liberation Sans, sans-serif" font-size="18.5" fill="#777">1</text>
<path d="M579.7,158.6 C577.9,158.6 575.3,162.7 573.5,165.6 C571.8,168.5 569.8,173.8 569.2,176.1 C568.6,178.4 569.2,179.2 570.0,179.6 C570.9,180.0 573.0,180.2 574.4,178.7 C575.9,177.3 577.2,173.0 578.8,170.8 C580.4,168.7 583.9,167.6 584.1,165.6 C584.2,163.5 581.4,158.6 579.7,158.6Z" fill="#b8ba00"/>
<path d="M605.1,169.1 C605.8,170.3 606.9,177.4 607.2,179.6 C607.4,181.8 607.0,181.9 606.5,182.2 C606.0,182.5 604.8,183.0 604.2,181.3 C603.6,179.7 602.8,174.6 603.0,172.6 C603.1,170.5 604.4,167.9 605.1,169.1Z" fill="#b8ba00"/>
<path d="M575.3,170.0 C575.9,168.7 577.6,168.1 577.9,169.1 C578.2,170.1 577.6,174.8 577.1,176.1 C576.5,177.4 574.7,178.0 574.4,177.0 C574.1,175.9 574.7,171.3 575.3,170.0Z" fill="#333"/>
<path d="M603.3,116.6 C603.8,115.5 605.3,115.1 605.9,115.7 C606.6,116.3 606.1,118.7 607.2,120.1 C608.2,121.4 610.3,122.3 612.1,123.6 C613.8,124.8 616.9,126.2 617.7,127.4 C618.5,128.6 617.9,129.9 617.0,130.6 C616.0,131.2 613.3,130.9 612.1,131.4 C610.8,132.0 609.6,132.5 609.4,134.1 C609.3,135.7 610.8,138.4 611.2,141.1 C611.6,143.7 612.1,146.9 612.1,149.8 C612.1,152.7 611.8,155.7 611.2,158.6 C610.6,161.5 609.3,164.4 608.6,167.3 C607.8,170.3 607.3,172.9 606.8,176.1 C606.4,179.3 606.2,184.1 605.9,186.6 C605.7,189.1 605.8,190.2 605.1,191.0 C604.3,191.8 602.2,192.2 601.6,191.5 C600.9,190.8 601.4,189.2 601.2,186.6 C601.1,184.0 600.9,179.3 600.7,176.1 C600.5,172.9 600.8,169.1 599.8,167.3 C598.8,165.6 596.6,165.3 594.6,165.6 C592.5,165.9 589.6,167.3 587.6,169.1 C585.5,170.8 583.8,173.5 582.3,176.1 C580.8,178.7 579.5,182.5 578.8,184.8 C578.1,187.2 578.7,189.2 577.9,190.1 C577.2,191.0 575.0,191.0 574.4,190.5 C573.8,189.9 574.3,189.0 574.4,186.6 C574.6,184.2 574.7,179.6 575.3,176.1 C575.9,172.6 577.3,168.5 577.9,165.6 C578.5,162.7 578.7,160.5 578.8,158.6 C578.9,156.7 577.9,155.4 578.5,154.2 C579.0,153.0 580.2,152.5 582.3,151.6 C584.4,150.7 588.4,150.1 591.1,148.9 C593.7,147.8 596.5,146.5 598.1,144.6 C599.7,142.7 600.1,140.5 600.7,137.6 C601.3,134.6 601.2,129.7 601.6,127.1 C601.9,124.4 602.7,123.6 603.0,121.8 C603.3,120.1 602.8,117.6 603.3,116.6Z" fill="#d2d400"/>
<path d="M602.4,123.6 C602.9,123.1 604.2,122.7 604.4,124.4 C604.5,126.2 603.8,131.0 603.3,134.1 C602.9,137.1 602.4,140.5 601.6,142.8 C600.7,145.2 599.8,146.6 598.1,148.1 C596.3,149.5 593.7,150.6 591.1,151.6 C588.4,152.5 584.3,152.8 582.3,153.7 C580.3,154.6 579.8,156.7 579.2,156.8 C578.5,156.9 577.9,155.1 578.5,154.2 C579.0,153.3 580.2,152.5 582.3,151.6 C584.4,150.7 588.4,150.1 591.1,148.9 C593.7,147.8 596.5,146.5 598.1,144.6 C599.7,142.7 600.1,140.5 600.7,137.6 C601.3,134.6 601.3,129.4 601.6,127.1 C601.9,124.7 602.0,124.0 602.4,123.6Z" fill="#7a3a06"/>
<path d="M605.1,123.6 C605.5,123.0 609.2,123.8 610.3,124.4 C611.5,125.0 612.5,126.5 612.1,127.1 C611.6,127.6 608.9,128.5 607.7,127.9 C606.5,127.4 604.6,124.1 605.1,123.6Z" fill="#e07a10"/>
<path d="M602.4,131.4 C602.9,130.9 604.7,131.2 605.1,132.0 C605.4,132.7 605.2,135.2 604.7,135.8 C604.3,136.4 602.6,136.2 602.3,135.5 C601.9,134.7 602.0,132.0 602.4,131.4Z" fill="#e07a10"/>
<path d="M605.1,137.6 C605.7,137.0 608.6,137.9 609.4,138.4 C610.3,139.0 610.6,140.5 610.0,141.1 C609.4,141.7 606.6,142.5 605.8,141.9 C605.0,141.4 604.5,138.2 605.1,137.6Z" fill="#7a3a06"/>
<path d="M603.3,145.4 C604.3,144.9 609.0,145.4 610.0,146.3 C611.0,147.2 610.4,150.1 609.4,150.7 C608.5,151.3 605.2,150.7 604.2,149.8 C603.2,148.9 602.4,146.0 603.3,145.4Z" fill="#e07a10"/>
<path d="M591.1,155.1 C592.4,153.9 597.4,153.1 598.9,153.7 C600.5,154.3 600.8,157.2 600.2,158.6 C599.6,160.0 597.0,161.7 595.4,162.1 C593.9,162.4 591.4,161.9 590.7,160.7 C590.0,159.5 589.7,156.2 591.1,155.1Z" fill="#e07a10"/>
<path d="M601.6,152.5 C602.2,151.6 605.1,151.1 605.9,151.6 C606.8,152.0 607.4,154.3 606.8,155.1 C606.2,155.9 603.3,156.9 602.4,156.5 C601.6,156.0 601.0,153.3 601.6,152.5Z" fill="#7a3a06"/>
<path d="M583.7,158.6 C584.6,157.6 587.5,156.8 588.4,157.7 C589.4,158.6 589.8,162.4 589.3,163.8 C588.8,165.3 586.5,166.5 585.5,166.5 C584.4,166.5 583.3,165.1 583.0,163.8 C582.7,162.5 582.8,159.6 583.7,158.6Z" fill="#e07a10"/>
<path d="M580.6,155.1 C581.1,154.4 583.4,154.3 584.1,154.7 C584.7,155.2 584.9,157.1 584.4,157.7 C583.9,158.3 581.5,159.0 580.9,158.6 C580.3,158.1 580.0,155.7 580.6,155.1Z" fill="#7a3a06"/>
<path d="M602.4,158.6 C603.0,157.8 605.4,157.1 605.9,157.7 C606.5,158.3 606.1,161.3 605.6,162.1 C605.0,162.9 603.1,163.0 602.6,162.4 C602.1,161.9 601.9,159.4 602.4,158.6Z" fill="#e07a10"/>
<path d="M599.8,162.1 C600.2,161.6 602.0,161.9 602.4,162.4 C602.9,163.0 602.6,165.1 602.3,165.6 C601.9,166.1 600.6,165.8 600.2,165.2 C599.8,164.7 599.4,162.6 599.8,162.1Z" fill="#7a3a06"/>
<path d="M601.2,169.1 C601.6,168.7 603.3,169.2 603.7,170.0 C604.0,170.7 603.7,173.0 603.3,173.5 C602.9,173.9 601.6,173.3 601.2,172.6 C600.9,171.9 600.8,169.5 601.2,169.1Z" fill="#e07a10"/>
<path d="M581.4,170.0 C582.2,169.1 585.7,167.3 586.7,167.3 C587.6,167.3 587.9,169.1 587.2,170.0 C586.5,170.8 583.3,172.6 582.3,172.6 C581.3,172.6 580.7,170.8 581.4,170.0Z" fill="#e07a10"/>
<path d="M573.9,188.4 C574.7,188.0 577.3,188.4 578.5,188.7 C579.6,189.0 580.8,189.6 580.6,190.1 C580.3,190.6 578.2,191.7 577.1,191.9 C575.9,192.0 574.1,191.4 573.5,190.8 C573.0,190.2 573.1,188.7 573.9,188.4Z" fill="#7a3a06"/>
<path d="M600.9,189.2 C601.6,188.8 604.9,189.0 605.8,189.4 C606.6,189.8 606.9,191.4 606.1,191.9 C605.4,192.3 602.1,192.3 601.2,191.9 C600.3,191.4 600.1,189.6 600.9,189.2Z" fill="#7a3a06"/>
<path d="M568.3,177.0 C568.9,176.7 571.9,177.6 572.7,178.2 C573.5,178.8 573.8,180.4 573.2,180.6 C572.6,180.9 570.0,180.6 569.2,179.9 C568.4,179.3 567.7,177.3 568.3,177.0Z" fill="#7a3a06"/>
<path d="M604.7,179.9 C605.1,179.7 607.1,179.9 607.5,180.3 C608.0,180.7 607.9,182.1 607.5,182.4 C607.1,182.7 605.5,182.5 605.1,182.0 C604.6,181.6 604.3,180.2 604.7,179.9Z" fill="#7a3a06"/>
<circle cx="609.4" cy="129.7" r="0.9" fill="#222"/></svg>
<div class="b" style="left:0px;top:0px;width:1840px;height:39px;background:#3b4446;"></div>
<div class="b" style="left:207px;top:0px;width:163px;height:39px;background:#009688;"></div>
<svg class="b" style="left:7px;top:6px;" width="24" height="24" viewBox="0 0 24 24"><path d="M2.5 10.5 L12 2.5 L21.5 10.5 V20.5 a1 1 0 0 1 -1 1 H14.8 V15.5 a2.8 2.8 0 0 0 -5.6 0 V21.5 H3.5 a1 1 0 0 1 -1 -1 Z" stroke="#fff" fill="none" stroke-width="1.6" stroke-linejoin="round" stroke-linecap="round"/></svg>
<svg class="b" style="left:76px;top:7px;" width="24" height="24" viewBox="0 0 24 24"><path d="M12 2 L21.5 6.8 V17 L12 22 L2.5 17 V6.8 Z M2.5 6.8 L12 11.8 L21.5 6.8" stroke="#fff" fill="none" stroke-width="1.6" stroke-linejoin="round" stroke-linecap="round"/></svg>
<div class="t" style="left:110px;top:6.0px;height:24px;line-height:24px;font-size:18px;color:#fff;letter-spacing:0.281px;">Prepare</div>
<svg class="b" style="left:238px;top:7px;" width="24" height="24" viewBox="0 0 24 24"><path d="M12 2 L22 7.2 L12 12.4 L2 7.2 Z M2.5 11.8 L12 16.8 L21.5 11.8 M2.5 16.2 L12 21.2 L21.5 16.2" stroke="#fff" fill="none" stroke-width="1.6" stroke-linejoin="round" stroke-linecap="round"/></svg>
<div class="t" style="left:273px;top:6.0px;height:24px;line-height:24px;font-size:18px;color:#fff;letter-spacing:0.140px;">Preview</div>
<svg class="b" style="left:407px;top:7px;" width="24" height="24" viewBox="0 0 24 24"><rect x="1.5" y="2.5" width="21" height="18.5" rx="1.5" stroke="#fff" fill="none" stroke-width="1.6" stroke-linejoin="round" stroke-linecap="round"/><path d="M5.5 17 H18.5 M9.5 5.5 h5 v4 h-5z M12 9.5 v3 M7.5 7.5 h2 M14.5 7.5 h2" stroke="#fff" fill="none" stroke-width="1.6" stroke-linejoin="round" stroke-linecap="round" stroke-width="1.3"/></svg>
<div class="t" style="left:441px;top:6.0px;height:24px;line-height:24px;font-size:18px;color:#fff;letter-spacing:-0.003px;">Device</div>
<svg class="b" style="left:568px;top:7px;" width="24" height="24" viewBox="0 0 24 24"><rect x="1.5" y="2.5" width="21" height="18.5" rx="1.5" stroke="#fff" fill="none" stroke-width="1.6" stroke-linejoin="round" stroke-linecap="round"/><path d="M9 7.5 H18.5 M9 11.8 H18.5 M9 16 H18.5 M5.3 7.5 h1 M5.3 11.8 h1 M5.3 16 h1" stroke="#fff" fill="none" stroke-width="1.6" stroke-linejoin="round" stroke-linecap="round" stroke-width="1.4"/></svg>
<div class="t" style="left:602px;top:6.0px;height:24px;line-height:24px;font-size:18px;color:#fff;letter-spacing:0.283px;">Project</div>
<div class="b" style="left:0px;top:39px;width:507px;height:1126px;background:#fff;"></div>
<div class="b" style="left:0px;top:39px;width:501px;height:19px;background:#cecece;"></div>
<div class="b" style="left:501px;top:39px;width:1px;height:1126px;background:#a8a8a8;"></div>
<div class="b" style="left:502px;top:39px;width:5px;height:1126px;background:#cecece;"></div>
<div class="b" style="left:0px;top:58px;width:500px;height:36px;background:linear-gradient(180deg,#f8f8f8,#efefef);"></div>
<svg class="b" style="left:6px;top:65px;" width="22" height="22" viewBox="0 0 22 22"><rect x="1" y="1" width="19.5" height="19.5" rx="2" fill="#f3f3f3" stroke="#8a8a8a" stroke-width="1.2"/><path d="M5 17 H16.5" stroke="#009688" stroke-width="1.5"/><path d="M8.5 4.5 h4.4 v4.2 h-4.4z M10.7 8.7 L10.7 12.5 M6 6.5 h2.5 M13 6.5 h2.5" stroke="#009688" stroke-width="1.3" fill="none"/><path d="M8.8 10.5 L10.7 13.2 L12.6 10.5z" fill="#009688"/></svg>
<div class="t" style="left:33px;top:63.5px;height:24px;line-height:24px;font-size:18px;color:#262e30;letter-spacing:0.284px;">Printer</div>
<svg class="b" style="left:469px;top:64px;" width="22" height="22" viewBox="0 0 22 22"><g stroke="#6b6b6b" fill="none" stroke-width="1.15" stroke-linecap="round"><path d="M2 5.3 H4.5 M9.1 5.3 H20.8 M2 15.4 H13.4 M18 15.4 H20.8"/><rect x="4.5" y="1.3" width="4.6" height="8" rx="2.2"/><rect x="13.4" y="11.5" width="4.6" height="8" rx="2.2"/></g></svg>
<div class="b" style="left:2px;top:104px;width:494px;height:84px;background:#fff;border:1.4px solid #62b52e;border-radius:9px;"></div>
<svg class="b" style="left:0px;top:100px;" width="62" height="90" viewBox="0 0 62 90"><g fill="none" stroke="#26262c" stroke-width="0.75" stroke-linecap="round"><path d="M18.5 36 V19.5 a1.6 1.6 0 0 1 3.2 0 V22 M22.6 36 V19 a1.6 1.6 0 0 1 3.2 0 V22 M27.4 36.5 V19 a1.6 1.6 0 0 1 3.2 0 V23 M31.6 36.5 V19.5 a1.6 1.6 0 0 1 3.2 0 V24"/></g>
<path d="M12 36.3 L26.3 39.4 V73.6 L13.5 68.6 Z" fill="#d3d4d6"/>
<path d="M26.3 39.4 L53.3 38.3 V71.1 L26.3 73.6 Z" fill="#e9eaeb"/>
<path d="M12 35.9 L38.6 35.2 L53.3 37.9 L26.3 39.6 Z" fill="#1e1e20"/>
<path d="M30.1 47.1 L51 46.4 V69.6 L30.1 71.5 Z" fill="#6c6e70"/>
<path d="M30.1 47.1 L37 46.9 V70.8 L30.1 71.5 Z" fill="#7a7c7e"/>
<path d="M31 67.5 L46 66 V67.2 L31 68.7 Z" fill="#e4e4e4"/>
<path d="M45.2 40.2 L51 40 V44.4 L45.2 44.8 Z" fill="#1d2a55"/><path d="M46.3 41 L49.8 40.9 V43.2 L46.3 43.4 Z" fill="#5a86d8"/>
<path d="M9 56.5 h3.6 v4.8 h-3.6z M11.5 46.5 h4 v3.2 h-4z M15 62 h7 v1.6 h-7z" fill="#bfc0c3"/><path d="M50.8 56 h1.6 v5.5 h-1.6z" fill="#555a66"/></svg>
<svg class="b" style="left:81px;top:143px;" width="13" height="8" viewBox="0 0 13 8"><path d="M1 1.5 L6.5 6 L12 1.5" fill="none" stroke="#667070" stroke-width="1.3" stroke-linecap="round" stroke-linejoin="round"/></svg>
<div class="t" style="left:102px;top:134.5px;height:24px;line-height:24px;font-size:18px;color:#262e30;letter-spacing:-0.088px;">Snapmaker U1</div>
<svg class="b" style="left:445px;top:134px;" width="22" height="22" viewBox="0 0 22 22"><g stroke="#6b6b6b" fill="none" stroke-width="1.3" stroke-linecap="round" stroke-linejoin="round"><path d="M10 3 H4 a2.3 2.3 0 0 0 -2.3 2.3 V18 a2.3 2.3 0 0 0 2.3 2.3 H16.6 a2.3 2.3 0 0 0 2.3 -2.3 V11.5"/><path d="M17.5 2 L20.2 4.7 L10 15 L6.6 15.6 L7.2 12.2 Z"/></g></svg>
<div class="t" style="left:15px;top:214.0px;height:24px;line-height:24px;font-size:18px;color:#262e30;letter-spacing:0.494px;">Bed type</div>
<div class="b" style="left:103px;top:207px;width:393px;height:38px;background:#efefef;border:1px solid #d6d6d6;"></div>
<svg class="b" style="left:110px;top:223px;" width="12" height="8" viewBox="0 0 12 8"><path d="M1 1.5 L6.0 6 L11 1.5" fill="none" stroke="#777" stroke-width="1.3" stroke-linecap="round" stroke-linejoin="round"/></svg>
<div class="t" style="left:128px;top:214.5px;height:24px;line-height:24px;font-size:18px;color:#6e6e6e;letter-spacing:0.218px;">Textured PEI Plate</div>
<div class="b" style="left:3px;top:266px;width:493px;height:26px;background:#f0f0f0;border-radius:6px 6px 0 0;"></div>
<div class="b" style="left:3px;top:266px;width:89px;height:27px;background:#fff;border-radius:6px 6px 0 0;"></div>
<div class="t" style="left:12px;top:265.5px;height:24px;line-height:24px;font-size:18px;color:#262e30;letter-spacing:-0.004px;">Nozzle 1</div>
<div class="t" style="left:103px;top:265.5px;height:24px;line-height:24px;font-size:18px;color:#c2c2c2;letter-spacing:0.121px;">Nozzle 2</div>
<div class="t" style="left:194px;top:265.5px;height:24px;line-height:24px;font-size:18px;color:#c2c2c2;letter-spacing:0.121px;">Nozzle 3</div>
<div class="t" style="left:285px;top:265.5px;height:24px;line-height:24px;font-size:18px;color:#c2c2c2;letter-spacing:0.121px;">Nozzle 4</div>
<div class="b" style="left:2px;top:291px;width:494px;height:74px;background:#fff;border:1px solid #ececec;border-top:none;border-radius:0 0 8px 8px;"></div>
<div class="t" style="left:19px;top:314.5px;height:24px;line-height:24px;font-size:18px;color:#262e30;letter-spacing:0.248px;">Diameter</div>
<div class="b" style="left:111px;top:307px;width:331px;height:39px;background:#efefef;border:1px solid #d6d6d6;"></div>
<svg class="b" style="left:118px;top:323px;" width="12" height="8" viewBox="0 0 12 8"><path d="M1 1.5 L6.0 6 L11 1.5" fill="none" stroke="#777" stroke-width="1.3" stroke-linecap="round" stroke-linejoin="round"/></svg>
<div class="t" style="left:136px;top:314.5px;height:24px;line-height:24px;font-size:18px;color:#6e6e6e;letter-spacing:-0.201px;">0.4mm</div>
<svg class="b" style="left:459px;top:315px;" width="22" height="22" viewBox="0 0 22 22"><g stroke="#6b6b6b" fill="none" stroke-width="1.3" stroke-linecap="round" stroke-linejoin="round"><path d="M10 3 H4 a2.3 2.3 0 0 0 -2.3 2.3 V18 a2.3 2.3 0 0 0 2.3 2.3 H16.6 a2.3 2.3 0 0 0 2.3 -2.3 V11.5"/><path d="M17.5 2 L20.2 4.7 L10 15 L6.6 15.6 L7.2 12.2 Z"/></g></svg>
<div class="b" style="left:0px;top:370px;width:500px;height:38px;background:linear-gradient(180deg,#f8f8f8,#efefef);"></div>
<svg class="b" style="left:6px;top:378px;" width="20" height="22" viewBox="0 0 20 22"><g fill="none" stroke-width="1.15"><path d="M4.5 1.5 C1.2 5 1.2 17 4.5 20.5" stroke="#888"/><path d="M8 1.5 C4.7 5 4.7 17 8 20.5 M11.5 1.5 C8.2 5 8.2 17 11.5 20.5" stroke="#009688"/></g><ellipse cx="15.2" cy="11" rx="2.9" ry="9.4" fill="none" stroke="#777" stroke-width="1.15"/></svg>
<div class="t" style="left:33px;top:376.5px;height:24px;line-height:24px;font-size:18px;color:#262e30;letter-spacing:-0.002px;">Filament</div>
<div class="b" style="left:242px;top:376px;width:125px;height:26px;background:#009688;border-radius:13px;"></div>
<div class="t" style="left:252px;top:379.2px;height:19.5px;line-height:19.5px;font-size:13.5px;color:#fff;letter-spacing:-0.003px;">Flushing volumes</div>
<svg class="b" style="left:380px;top:378px;" width="22" height="22" viewBox="0 0 22 22"><g fill="none" stroke-width="1.15" stroke-linecap="round"><path d="M4.3 1.4 C0.4 5.5 0.4 16 4.3 20.2" stroke="#777"/><path d="M7.6 1.4 C3.7 5.5 3.7 16 7.6 20.2" stroke="#009688" stroke-width="1.4"/><path d="M11.9 1.6 C10 3.2 9 5.2 8.7 7.4 M8.7 14.2 C9 16.4 10 18.4 11.9 20" stroke="#777"/><path d="M9.2 10.5 H19.8" stroke="#777"/></g></svg>
<svg class="b" style="left:413px;top:378px;" width="22" height="22" viewBox="0 0 22 22"><g fill="none" stroke-width="1.15" stroke-linecap="round"><path d="M4.3 1.4 C0.4 5.5 0.4 16 4.3 20.2" stroke="#777"/><path d="M7.6 1.4 C3.7 5.5 3.7 16 7.6 20.2" stroke="#009688" stroke-width="1.4"/><path d="M11.9 1.6 C10 3.2 9 5.2 8.7 7.4 M8.7 14.2 C9 16.4 10 18.4 11.9 20" stroke="#777"/><path d="M9.2 10.5 H19.8 M14.6 5.2 V15.6" stroke="#777"/></g></svg>
<svg class="b" style="left:469px;top:378px;" width="22" height="22" viewBox="0 0 22 22"><g stroke="#6b6b6b" fill="none" stroke-width="1.15" stroke-linecap="round"><path d="M2 5.3 H4.5 M9.1 5.3 H20.8 M2 15.4 H13.4 M18 15.4 H20.8"/><rect x="4.5" y="1.3" width="4.6" height="8" rx="2.2"/><rect x="13.4" y="11.5" width="4.6" height="8" rx="2.2"/></g></svg>
<div class="b" style="left:12px;top:434.5px;width:25px;height:25px;background:#7a3c00;"></div>
<div class="t" style="left:12px;top:436.0px;height:22px;line-height:22px;font-size:16px;color:#fff;letter-spacing:0.000px;width:25px;text-align:center;">1</div>
<div class="b" style="left:43px;top:431px;width:166px;height:32px;background:#fff;border:1px solid #dcdcdc;"></div>
<svg class="b" style="left:50px;top:443.5px;" width="12" height="8" viewBox="0 0 12 8"><path d="M1 1.5 L6.0 6 L11 1.5" fill="none" stroke="#555" stroke-width="1.3" stroke-linecap="round" stroke-linejoin="round"/></svg>
<div class="t" style="left:68px;top:435.2px;height:23.5px;line-height:23.5px;font-size:17.5px;color:#262e30;letter-spacing:-0.347px;">Snapmaker PLA ...</div>
<svg class="b" style="left:215px;top:437.5px;" width="19" height="19" viewBox="0 0 19 19"><circle cx="9.5" cy="9.5" r="8.3" fill="none" stroke="#222" stroke-width="1.3"/><circle cx="5.8" cy="9.5" r="1.1" fill="#222"/><circle cx="9.5" cy="9.5" r="1.1" fill="#222"/><circle cx="13.2" cy="9.5" r="1.1" fill="#222"/></svg>
<div class="b" style="left:249px;top:434.5px;width:25px;height:25px;background:#ffff00;"></div>
<div class="t" style="left:249px;top:436.0px;height:22px;line-height:22px;font-size:16px;color:#222;letter-spacing:0.000px;width:25px;text-align:center;">2</div>
<div class="b" style="left:280px;top:431px;width:180px;height:32px;background:#fff;border:1px solid #dcdcdc;"></div>
<svg class="b" style="left:287px;top:443.5px;" width="12" height="8" viewBox="0 0 12 8"><path d="M1 1.5 L6.0 6 L11 1.5" fill="none" stroke="#555" stroke-width="1.3" stroke-linecap="round" stroke-linejoin="round"/></svg>
<div class="t" style="left:305px;top:435.2px;height:23.5px;line-height:23.5px;font-size:17.5px;color:#262e30;letter-spacing:-0.305px;">Snapmaker PLA M...</div>
<svg class="b" style="left:467px;top:437.5px;" width="19" height="19" viewBox="0 0 19 19"><circle cx="9.5" cy="9.5" r="8.3" fill="none" stroke="#222" stroke-width="1.3"/><circle cx="5.8" cy="9.5" r="1.1" fill="#222"/><circle cx="9.5" cy="9.5" r="1.1" fill="#222"/><circle cx="13.2" cy="9.5" r="1.1" fill="#222"/></svg>
<div class="b" style="left:12px;top:472.5px;width:25px;height:25px;background:#ff8000;"></div>
<div class="t" style="left:12px;top:474.0px;height:22px;line-height:22px;font-size:16px;color:#222;letter-spacing:0.000px;width:25px;text-align:center;">3</div>
<div class="b" style="left:43px;top:469px;width:166px;height:32px;background:#fff;border:1px solid #dcdcdc;"></div>
<svg class="b" style="left:50px;top:481.5px;" width="12" height="8" viewBox="0 0 12 8"><path d="M1 1.5 L6.0 6 L11 1.5" fill="none" stroke="#555" stroke-width="1.3" stroke-linecap="round" stroke-linejoin="round"/></svg>
<div class="t" style="left:68px;top:473.2px;height:23.5px;line-height:23.5px;font-size:17.5px;color:#262e30;letter-spacing:-0.347px;">Snapmaker PLA ...</div>
<svg class="b" style="left:215px;top:475.5px;" width="19" height="19" viewBox="0 0 19 19"><circle cx="9.5" cy="9.5" r="8.3" fill="none" stroke="#222" stroke-width="1.3"/><circle cx="5.8" cy="9.5" r="1.1" fill="#222"/><circle cx="9.5" cy="9.5" r="1.1" fill="#222"/><circle cx="13.2" cy="9.5" r="1.1" fill="#222"/></svg>
<div class="b" style="left:249px;top:472.5px;width:25px;height:25px;background:#000;"></div>
<div class="t" style="left:249px;top:474.0px;height:22px;line-height:22px;font-size:16px;color:#fff;letter-spacing:0.000px;width:25px;text-align:center;">4</div>
<div class="b" style="left:280px;top:469px;width:180px;height:32px;background:#fff;border:1px solid #dcdcdc;"></div>
<svg class="b" style="left:287px;top:481.5px;" width="12" height="8" viewBox="0 0 12 8"><path d="M1 1.5 L6.0 6 L11 1.5" fill="none" stroke="#555" stroke-width="1.3" stroke-linecap="round" stroke-linejoin="round"/></svg>
<div class="t" style="left:305px;top:473.2px;height:23.5px;line-height:23.5px;font-size:17.5px;color:#262e30;letter-spacing:-0.305px;">Snapmaker PLA M...</div>
<svg class="b" style="left:467px;top:475.5px;" width="19" height="19" viewBox="0 0 19 19"><circle cx="9.5" cy="9.5" r="8.3" fill="none" stroke="#222" stroke-width="1.3"/><circle cx="5.8" cy="9.5" r="1.1" fill="#222"/><circle cx="9.5" cy="9.5" r="1.1" fill="#222"/><circle cx="13.2" cy="9.5" r="1.1" fill="#222"/></svg>
<div class="b" style="left:0px;top:524px;width:500px;height:38px;background:linear-gradient(180deg,#f8f8f8,#efefef);"></div>
<svg class="b" style="left:6px;top:532px;" width="22" height="22" viewBox="0 0 22 22"><g fill="none" stroke-linejoin="round" stroke-width="1.2"><path d="M11 1.5 L20.5 6.5 L11 11.5 L1.5 6.5 Z" stroke="#555"/><path d="M1.5 10.8 L11 15.8 L20.5 10.8" stroke="#009688"/><path d="M1.5 15 L11 20 L20.5 15" stroke="#888"/></g></svg>
<div class="t" style="left:33px;top:530.5px;height:24px;line-height:24px;font-size:18px;color:#262e30;letter-spacing:-0.288px;">Process</div>
<div class="b" style="left:110px;top:530px;width:124px;height:27px;background:#dedede;border-radius:13.5px;"></div>
<div class="b" style="left:110px;top:530px;width:63px;height:27px;background:#009688;border-radius:13.5px;"></div>
<div class="t" style="left:120px;top:532.8px;height:21.5px;line-height:21.5px;font-size:15.5px;color:#fff;letter-spacing:-0.300px;">Global</div>
<div class="t" style="left:176px;top:532.8px;height:21.5px;line-height:21.5px;font-size:15.5px;color:#6b6b6b;letter-spacing:-0.078px;">Objects</div>
<div class="t" style="left:292px;top:531.8px;height:21.5px;line-height:21.5px;font-size:15.5px;color:#262e30;letter-spacing:-0.117px;">Advanced</div>
<div class="b" style="left:369px;top:532px;width:29px;height:22px;background:#009688;border-radius:5px;"></div>
<div class="b" style="left:380px;top:535px;width:15px;height:16px;background:#d5dcdc;border-radius:4px;"></div>
<svg class="b" style="left:437px;top:532px;" width="21" height="21" viewBox="0 0 21 21"><rect x="1.2" y="1.2" width="18.5" height="18.5" rx="2" fill="none" stroke="#6b6b6b" stroke-width="1.2"/><path d="M8 6 H16 M8 10.5 H16 M8 15 H16 M4.5 6 h1.5 M4.5 10.5 h1.5 M4.5 15 h1.5" stroke="#009688" stroke-width="1.3" stroke-linecap="round"/></svg>
<div class="t" style="left:470px;top:530px;font-size:9.5px;color:#555;line-height:10px;">A</div><div class="t" style="left:482px;top:543px;font-size:9.5px;color:#555;line-height:10px;">B</div>
<svg class="b" style="left:469px;top:530px;" width="23" height="24" viewBox="0 0 23 24"><g fill="none" stroke="#009688" stroke-width="1.4" stroke-linecap="round" stroke-linejoin="round"><path d="M19 10 V7.5 H13 M15.2 5 L12.8 7.5 L15.2 10"/><path d="M4 13.5 V17.5 H10 M7.8 15 L10.2 17.5 L7.8 20"/></g></svg>
<svg class="b" style="left:11px;top:582.0px;" width="20" height="20" viewBox="0 0 19 19"><g fill="none" stroke="#f47b3a" stroke-width="1.35" stroke-linecap="round" stroke-linejoin="round"><path d="M3.2 6.2 A7.6 7.6 0 1 1 2.6 12.5"/><path d="M2.6 1.8 L3 6.5 L7.6 6.6"/></g></svg>
<div class="b" style="left:38px;top:576px;width:382px;height:32px;background:#fff;border:1px solid #dcdcdc;"></div>
<svg class="b" style="left:45px;top:588.5px;" width="12" height="8" viewBox="0 0 12 8"><path d="M1 1.5 L6.0 6 L11 1.5" fill="none" stroke="#555" stroke-width="1.3" stroke-linecap="round" stroke-linejoin="round"/></svg>
<div class="t" style="left:63px;top:580.5px;height:24px;line-height:24px;font-size:18px;color:#262e30;letter-spacing:-0.011px;">* 0.20 Standard @Snapmaker U1 (0.4 noz...</div>
<svg class="b" style="left:432px;top:581px;" width="22" height="22" viewBox="0 0 22 22"><g fill="none" stroke="#6b6b6b" stroke-width="1.3" stroke-linejoin="round"><path d="M3.5 1.8 H15.5 L20 6 V18 a2 2 0 0 1 -2 2 H3.5 a2 2 0 0 1 -2 -2 V3.8 a2 2 0 0 1 2 -2 Z"/><path d="M6 1.8 V6.5 H14.5 V1.8 M5 20 V12.5 H16.5 V20"/></g></svg>
<svg class="b" style="left:465px;top:581px;" width="22" height="22" viewBox="0 0 22 22"><g fill="none" stroke="#6b6b6b" stroke-width="1.3" stroke-linecap="round"><circle cx="9.5" cy="9.5" r="7.6"/><path d="M15.2 15.2 L20.5 20.5"/><path d="M4.8 9 A4.8 4.8 0 0 1 9 4.8"/></g></svg>
<div class="t" style="left:13px;top:628.5px;height:24px;line-height:24px;font-size:18px;color:#6b6b6b;letter-spacing:0.283px;">Quality</div>
<div class="t" style="left:83px;top:628.5px;height:24px;line-height:24px;font-size:18px;color:#f0764f;letter-spacing:0.495px;">Strength</div>
<div class="t" style="left:168px;top:628.5px;height:24px;line-height:24px;font-size:18px;color:#6b6b6b;letter-spacing:-0.209px;">Speed</div>
<div class="t" style="left:233px;top:628.5px;height:24px;line-height:24px;font-size:18px;color:#ee6a4a;letter-spacing:0.145px;font-weight:700;">Support</div>
<div class="t" style="left:317px;top:628.5px;height:24px;line-height:24px;font-size:18px;color:#f0764f;letter-spacing:0.460px;">Multimaterial</div>
<div class="t" style="left:438px;top:628.5px;height:24px;line-height:24px;font-size:18px;color:#f0764f;letter-spacing:0.331px;">Others</div>
<div class="b" style="left:230px;top:652px;width:77px;height:3px;background:#009688;border-radius:1.5px;"></div>
<div class="b" style="left:0px;top:657px;width:500px;height:1px;background:#dedede;"></div>
<div class="b" style="left:481px;top:665px;width:17px;height:500px;background:#f1f1f1;"></div>
<div class="b" style="left:488.5px;top:686px;width:4px;height:250px;background:#777;border-radius:2px;"></div>
<div class="b" style="left:106px;top:682.5px;width:369px;height:1px;background:#e8e8e8;"></div>
<div class="t" style="left:30px;top:670.5px;height:24px;line-height:24px;font-size:18px;color:#222;letter-spacing:0.145px;font-weight:700;">Support</div>

<svg class="b" style="left:1px;top:670px;" width="24" height="24" viewBox="0 0 24 24"><path d="M1 21.5 H23" stroke="#888" stroke-width="1.2"/><path d="M2 3 v17 h10 v-17 z M5.3 3 v17 M8.7 3 v17" fill="none" stroke="#009688" stroke-width="1.2"/><path d="M12 2 H19 a2.5 2.5 0 0 1 2.5 2.5 V21" fill="none" stroke="#888" stroke-width="1.2"/></svg>
<div class="b" style="left:72px;top:1104.5px;width:403px;height:1px;background:#e8e8e8;"></div>
<div class="t" style="left:30px;top:1092.5px;height:24px;line-height:24px;font-size:18px;color:#222;letter-spacing:0.251px;font-weight:700;">Raft</div>

<svg class="b" style="left:1px;top:1092px;" width="24" height="24" viewBox="0 0 24 24"><path d="M2.5 14 V3.5 a2 2 0 0 1 2 -2 H19.5 a2 2 0 0 1 2 2 V14" fill="none" stroke="#888" stroke-width="1.2"/><path d="M2 15 h20 v5 h-20z" fill="#009688"/><path d="M4.7 16 v3 M7.4 16 v3 M10.1 16 v3 M12.8 16 v3 M15.5 16 v3 M18.2 16 v3" stroke="#fff" stroke-width="0.9"/><path d="M1 22.2 H23" stroke="#009688" stroke-width="1.2"/></svg>
<div class="t" style="left:30px;top:709.5px;height:24px;line-height:24px;font-size:18px;color:#f0764f;letter-spacing:0.280px;">Enable support</div>
<svg class="b" style="left:272px;top:710.5px;" width="19" height="19" viewBox="0 0 19 19"><g fill="none" stroke="#f47b3a" stroke-width="1.35" stroke-linecap="round" stroke-linejoin="round"><path d="M3.2 6.2 A7.6 7.6 0 1 1 2.6 12.5"/><path d="M2.6 1.8 L3 6.5 L7.6 6.6"/></g></svg>
<svg class="b" style="left:290px;top:710.5px;" width="19" height="19" viewBox="0 0 19 19"><rect x="0" y="0" width="19" height="19" rx="2.5" fill="#009688"/><path d="M3.6 7.6 L8.4 12 L15.6 6.2" fill="none" stroke="#fff" stroke-width="1.5" stroke-linecap="round" stroke-linejoin="round"/></svg>
<div class="t" style="left:30px;top:747.5px;height:24px;line-height:24px;font-size:18px;color:#262e30;letter-spacing:-0.005px;">Type</div>
<div class="b" style="left:290px;top:743px;width:144px;height:32px;background:#fff;border:1px solid #dcdcdc;"></div>
<svg class="b" style="left:297px;top:755.5px;" width="12" height="8" viewBox="0 0 12 8"><path d="M1 1.5 L6.0 6 L11 1.5" fill="none" stroke="#555" stroke-width="1.3" stroke-linecap="round" stroke-linejoin="round"/></svg>
<div class="t" style="left:315px;top:747.5px;height:24px;line-height:24px;font-size:18px;color:#262e30;letter-spacing:0.331px;">Tree (auto)</div>
<div class="t" style="left:30px;top:785.5px;height:24px;line-height:24px;font-size:18px;color:#f0764f;letter-spacing:-0.203px;">Style</div>
<svg class="b" style="left:272px;top:787.0px;" width="19" height="19" viewBox="0 0 19 19"><g fill="none" stroke="#f47b3a" stroke-width="1.35" stroke-linecap="round" stroke-linejoin="round"><path d="M3.2 6.2 A7.6 7.6 0 1 1 2.6 12.5"/><path d="M2.6 1.8 L3 6.5 L7.6 6.6"/></g></svg>
<div class="b" style="left:290px;top:781px;width:144px;height:32px;background:#fff;border:1px solid #dcdcdc;"></div>
<svg class="b" style="left:297px;top:793.5px;" width="12" height="8" viewBox="0 0 12 8"><path d="M1 1.5 L6.0 6 L11 1.5" fill="none" stroke="#555" stroke-width="1.3" stroke-linecap="round" stroke-linejoin="round"/></svg>
<div class="t" style="left:315px;top:785.5px;height:24px;line-height:24px;font-size:18px;color:#262e30;letter-spacing:0.332px;">Tree Hybrid</div>
<div class="t" style="left:30px;top:823.5px;height:24px;line-height:24px;font-size:18px;color:#262e30;letter-spacing:0.062px;">Threshold angle</div>
<div class="b" style="left:290px;top:819px;width:144px;height:32px;background:#fff;border:1px solid #dcdcdc;"></div>
<svg class="b" style="left:296px;top:824.5px;" width="12" height="22" viewBox="0 0 12 22"><g fill="none" stroke="#6b6b6b" stroke-width="1.1" stroke-linecap="round" stroke-linejoin="round"><path d="M1.5 5.5 L6 2.5 L10.5 5.5 M1.5 16.5 L6 19.5 L10.5 16.5"/><path d="M0 11 H4" stroke="#ddd"/></g></svg>
<div class="t" style="left:318px;top:823.5px;height:24px;line-height:24px;font-size:18px;color:#262e30;letter-spacing:-0.010px;">30</div>
<div class="t" style="left:423px;top:822.5px;height:19px;line-height:19px;font-size:13px;color:#777;letter-spacing:0.000px;">°</div>
<div class="t" style="left:30px;top:861.5px;height:24px;line-height:24px;font-size:18px;color:#262e30;letter-spacing:0.231px;">Threshold overlap</div>
<div class="b" style="left:290px;top:857px;width:144px;height:32px;background:#efefef;border:1px solid #dcdcdc;"></div>
<div class="t" style="left:298px;top:861.5px;height:24px;line-height:24px;font-size:18px;color:#6e6e6e;letter-spacing:-0.675px;">50%</div>
<div class="t" style="left:363px;top:864.5px;height:21px;line-height:21px;font-size:15px;color:#6e6e6e;letter-spacing:0.000px;">mm or %</div>
<div class="t" style="left:30px;top:899.5px;height:24px;line-height:24px;font-size:18px;color:#262e30;letter-spacing:0.209px;">First layer density</div>
<div class="b" style="left:290px;top:895px;width:144px;height:32px;background:#efefef;border:1px solid #dcdcdc;"></div>
<div class="t" style="left:298px;top:899.5px;height:24px;line-height:24px;font-size:18px;color:#6e6e6e;letter-spacing:-0.010px;">90</div>
<div class="t" style="left:411px;top:902.5px;height:21px;line-height:21px;font-size:15px;color:#6e6e6e;letter-spacing:-0.338px;">%</div>
<div class="t" style="left:30px;top:937.5px;height:24px;line-height:24px;font-size:18px;color:#262e30;letter-spacing:0.140px;">First layer expansion</div>
<div class="b" style="left:290px;top:933px;width:144px;height:32px;background:#efefef;border:1px solid #dcdcdc;"></div>
<div class="t" style="left:298px;top:937.5px;height:24px;line-height:24px;font-size:18px;color:#6e6e6e;letter-spacing:-0.010px;">2</div>
<div class="t" style="left:398px;top:940.5px;height:21px;line-height:21px;font-size:15px;color:#6e6e6e;letter-spacing:0.005px;">mm</div>
<div class="t" style="left:30px;top:975.5px;height:24px;line-height:24px;font-size:18px;color:#262e30;letter-spacing:0.311px;">On build plate only</div>
<div class="b" style="left:290px;top:976.5px;width:19px;height:19px;background:#fff;border:1px solid #d9d9d9;border-radius:3px;"></div>
<div class="t" style="left:30px;top:1013.5px;height:24px;line-height:24px;font-size:18px;color:#262e30;letter-spacing:0.342px;">Support critical regions only</div>
<div class="b" style="left:290px;top:1014.5px;width:19px;height:19px;background:#fff;border:1px solid #d9d9d9;border-radius:3px;"></div>
<div class="t" style="left:30px;top:1051.5px;height:24px;line-height:24px;font-size:18px;color:#262e30;letter-spacing:0.042px;">Remove small overhangs</div>
<svg class="b" style="left:290px;top:1052.5px;" width="19" height="19" viewBox="0 0 19 19"><rect x="0" y="0" width="19" height="19" rx="2.5" fill="#009688"/><path d="M3.6 7.6 L8.4 12 L15.6 6.2" fill="none" stroke="#fff" stroke-width="1.5" stroke-linecap="round" stroke-linejoin="round"/></svg>
<div class="t" style="left:30px;top:1131.5px;height:24px;line-height:24px;font-size:18px;color:#262e30;letter-spacing:0.180px;">Raft layers</div>
<div class="b" style="left:290px;top:1127px;width:144px;height:32px;background:#fff;border:1px solid #dcdcdc;"></div>
<svg class="b" style="left:296px;top:1132.5px;" width="12" height="22" viewBox="0 0 12 22"><g fill="none" stroke="#6b6b6b" stroke-width="1.1" stroke-linecap="round" stroke-linejoin="round"><path d="M1.5 5.5 L6 2.5 L10.5 5.5 M1.5 16.5 L6 19.5 L10.5 16.5"/><path d="M0 11 H4" stroke="#ddd"/></g></svg>
<div class="t" style="left:318px;top:1131.5px;height:24px;line-height:24px;font-size:18px;color:#262e30;letter-spacing:-0.010px;">0</div>
<div class="t" style="left:388px;top:1133.5px;height:21px;line-height:21px;font-size:15px;color:#6e6e6e;letter-spacing:0.165px;">layers</div>
<div class="b" style="left:16.5px;top:662.5px;width:421.5px;height:160.5px;border:4.8px solid #fdb813;border-radius:4px;"></div>
</body></html>
